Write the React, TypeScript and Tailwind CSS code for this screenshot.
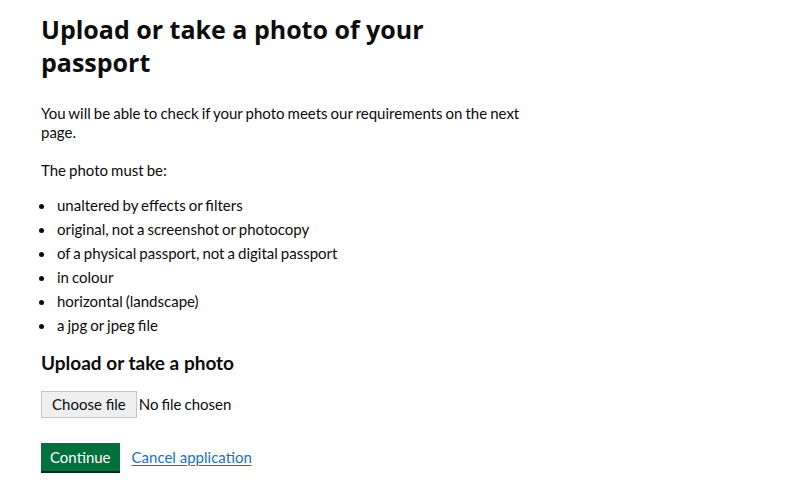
const requirements = [
  "unaltered by effects or filters",
  "original, not a screenshot or photocopy",
  "of a physical passport, not a digital passport",
  "in colour",
  "horizontal (landscape)",
  "a jpg or jpeg file",
];

export default function App() {
  return (
    <main className="min-h-screen bg-white text-[#0b0c0c] font-['Lato',sans-serif]">
      <div className="w-[490px] ml-[41px] pt-[13px]">
        {/* Page heading */}
        <h1 className="font-['Open_Sans',sans-serif] font-bold text-[25px] leading-[33px] mb-[25px]">
          Upload or take a photo of your passport
        </h1>

        <p className="text-[15px] leading-[19px] [word-spacing:-0.8px] mb-[19px]">
          You will be able to check if your photo meets our requirements on the next page.
        </p>
        <p className="text-[15px] leading-[19px] [word-spacing:-0.8px] mb-[16px]">The photo must be:</p>

        <ul className="flex flex-col gap-[5px] mb-[15px]">
          {requirements.map((item) => (
            <li key={item} className="flex items-center text-[15px] leading-[19px] [word-spacing:-0.8px]">
              <span className="w-[5px] h-[5px] rounded-full bg-[#0b0c0c] ml-[-2px] mr-[13px] mt-[2px] shrink-0" />
              <span>{item}</span>
            </li>
          ))}
        </ul>

        {/* File upload */}
        <h2 className="font-bold text-[19px] leading-[25px] mb-[16px]">Upload or take a photo</h2>
        <div className="flex items-center gap-[2px] mb-[25px]">
          <label className="h-[27px] px-[10px] flex items-center bg-[#efefef] border border-[#c4c4c4] text-[15px] cursor-pointer">
            Choose file
          </label>
          <span className="text-[15px] [word-spacing:-0.8px]">No file chosen</span>
        </div>

        {/* Actions */}
        <div className="flex items-center gap-[12px]">
          <button className="h-[28px] px-[9px] bg-[#00703c] text-white text-[15px] shadow-[0_2px_0_#002d18]">
            Continue
          </button>
          <a href="#" className="text-[15px] text-[#1d70b8] underline underline-offset-[2px]">
            Cancel application
          </a>
        </div>
      </div>
    </main>
  );
}
